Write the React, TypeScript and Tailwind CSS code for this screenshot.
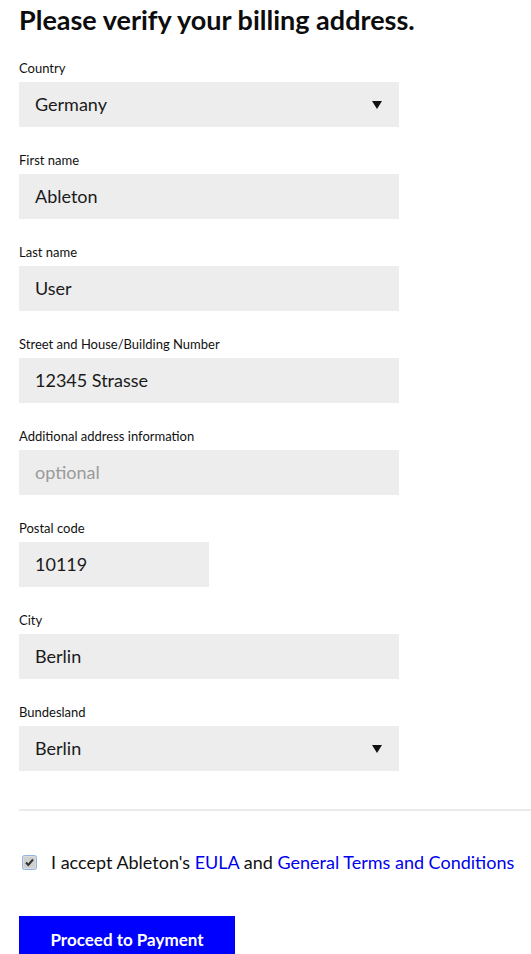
import React from "react";

const font = { fontFamily: "Lato, 'Open Sans', sans-serif" };

function Caret() {
  return (
    <svg width="10" height="8" viewBox="0 0 10 8" className="shrink-0">
      <path d="M0 0 H10 L5 8 Z" fill="#111" />
    </svg>
  );
}

function Field({
  label,
  value,
  placeholder,
  select,
  narrow,
}: {
  label: string;
  value?: string;
  placeholder?: string;
  select?: boolean;
  narrow?: boolean;
}) {
  return (
    <div className="mb-[25px]">
      <div className="text-[13px] leading-[16px] mb-[6px] text-[#111]">{label}</div>
      <div
        className={`h-[45px] bg-[#ededed] flex items-center pl-[16px] pr-[16px] justify-between ${
          narrow ? "w-[190px]" : "w-[380px]"
        }`}
      >
        {value ? (
          <span className="text-[18px] text-[#1a1a1a]">{value}</span>
        ) : (
          <span className="text-[18px] text-[#9a9a9a]">{placeholder}</span>
        )}
        {select && (
          <span className="pr-[1px]">
            <Caret />
          </span>
        )}
      </div>
    </div>
  );
}

export default function App() {
  return (
    <div className="bg-white min-h-[954px] pl-[19px] overflow-hidden" style={font}>
      <h1 className="text-[27px] leading-[32px] font-bold text-[#0d0d0d] pt-[4px] mb-[24px]">
        Please verify your billing address.
      </h1>
      <Field label="Country" value="Germany" select />
      <Field label="First name" value="Ableton" />
      <Field label="Last name" value="User" />
      <Field label="Street and House/Building Number" value="12345 Strasse" />
      <Field label="Additional address information" placeholder="optional" />
      <Field label="Postal code" value="10119" narrow />
      <Field label="City" value="Berlin" />
      <Field label="Bundesland" value="Berlin" select />
      <div className="h-[2px] bg-[#ebebeb] mt-[38px]" />
      <div className="flex items-center mt-[40px] h-[22px]">
        <svg width="15" height="15" viewBox="0 0 15 15" className="ml-[3px] mr-[14px] shrink-0">
          <rect x="0.5" y="0.5" width="14" height="14" rx="2" fill="#dcdcdc" stroke="#8fb3e6" />
          <rect x="2" y="2" width="11" height="11" rx="1" fill="#d0d0d0" />
          <path d="M4 7.5 L6.3 10 L11 4.5" stroke="#333" strokeWidth="2" fill="none" />
        </svg>
        <span className="text-[18px] text-[#111]">
          I accept Ableton's <span className="text-[#0000ee]">EULA</span> and{" "}
          <span className="text-[#0000ee]">General Terms and Conditions</span>
        </span>
      </div>
      <button className="mt-[43px] w-[216px] h-[48px] bg-[#0000ff] text-white font-bold text-[17px] flex items-center justify-center">
        Proceed to Payment
      </button>
    </div>
  );
}
